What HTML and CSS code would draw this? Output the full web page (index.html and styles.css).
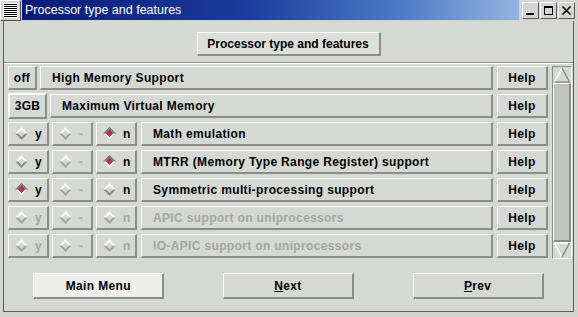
FILE: index.html
```html
<!DOCTYPE html>
<html lang="en">

<head>
  <meta charset="UTF-8">
  <title>Processor type and features</title>
  <link rel="stylesheet" href="styles.css">
</head>

<body>
  <div class="win">
    <div class="titlebar">
      <div class="menu-btn">
        <svg width="15" height="15" viewBox="0 0 15 15">
          <rect x="0" y="0" width="15" height="15" fill="#fff" />
          <path d="M1 1.5h13M1 3.5h13M1 5.5h13M1 7.5h13M1 9.5h13M1 11.5h13M1 13.5h13" stroke="#000" stroke-width="1" />
        </svg>
      </div>
      <div class="title">Processor type and features</div>
      <div class="tb-btns">
        <div class="tb">
          <svg width="11" height="11" viewBox="0 0 11 11"><rect x="1" y="8" width="8" height="2" fill="#000" /></svg>
        </div>
        <div class="tb">
          <svg width="11" height="11" viewBox="0 0 11 11"><rect x="1.5" y="1.5" width="8" height="8" fill="none" stroke="#000" /><rect x="1" y="1" width="9" height="2" fill="#000" /></svg>
        </div>
        <div class="tb">
          <svg width="11" height="11" viewBox="0 0 11 11"><path d="M1.5 1.5l8 8M9.5 1.5l-8 8" stroke="#000" stroke-width="1.6" /></svg>
        </div>
      </div>
    </div>

    <div class="client">
      <div class="head">
        <div class="btn head-btn">Processor type and features</div>
      </div>

      <div class="list">
        <div class="rows">
          <div class="row">
            <div class="btn val val-off">off</div>
            <div class="btn label">High Memory Support</div>
            <div class="btn help">Help</div>
          </div>
          <div class="row">
            <div class="btn val val-gb">3GB</div>
            <div class="btn label label-gb">Maximum Virtual Memory</div>
            <div class="btn help">Help</div>
          </div>
          <div class="row">
            <div class="btn radio"><span class="dia"></span><span class="let">y</span></div>
            <div class="btn radio off"><span class="dia"></span><span class="let">-</span></div>
            <div class="btn radio"><span class="dia on"></span><span class="let">n</span></div>
            <div class="btn label label-tri">Math emulation</div>
            <div class="btn help">Help</div>
          </div>
          <div class="row">
            <div class="btn radio"><span class="dia"></span><span class="let">y</span></div>
            <div class="btn radio off"><span class="dia"></span><span class="let">-</span></div>
            <div class="btn radio"><span class="dia on"></span><span class="let">n</span></div>
            <div class="btn label label-tri">MTRR (Memory Type Range Register) support</div>
            <div class="btn help">Help</div>
          </div>
          <div class="row">
            <div class="btn radio"><span class="dia on"></span><span class="let">y</span></div>
            <div class="btn radio off"><span class="dia"></span><span class="let">-</span></div>
            <div class="btn radio"><span class="dia"></span><span class="let">n</span></div>
            <div class="btn label label-tri">Symmetric multi-processing support</div>
            <div class="btn help">Help</div>
          </div>
          <div class="row">
            <div class="btn radio off"><span class="dia"></span><span class="let">y</span></div>
            <div class="btn radio off"><span class="dia"></span><span class="let">-</span></div>
            <div class="btn radio off"><span class="dia"></span><span class="let">n</span></div>
            <div class="btn label label-tri off">APIC support on uniprocessors</div>
            <div class="btn help">Help</div>
          </div>
          <div class="row">
            <div class="btn radio off"><span class="dia"></span><span class="let">y</span></div>
            <div class="btn radio off"><span class="dia"></span><span class="let">-</span></div>
            <div class="btn radio off"><span class="dia"></span><span class="let">n</span></div>
            <div class="btn label label-tri off">IO-APIC support on uniprocessors</div>
            <div class="btn help">Help</div>
          </div>
        </div>

        <div class="scroll">
          <svg class="arrow" width="18" height="16" viewBox="0 0 18 16">
            <path d="M9 1L1.5 15" stroke="#fff" stroke-width="1.5" fill="none" />
            <path d="M9 1L16.5 15M1.5 15h15" stroke="#8a8e88" stroke-width="1.5" fill="none" />
          </svg>
          <div class="slider"></div>
          <svg class="arrow" width="18" height="16" viewBox="0 0 18 16">
            <path d="M1.5 1h15M1.5 1L9 15" stroke="#fff" stroke-width="1.5" fill="none" />
            <path d="M16.5 1L9 15" stroke="#8a8e88" stroke-width="1.5" fill="none" />
          </svg>
        </div>
      </div>

      <div class="foot">
        <div class="btn big main">Main Menu</div>
        <div class="btn big"><u>N</u>ext</div>
        <div class="btn big"><u>P</u>rev</div>
      </div>
    </div>
  </div>
</body>

</html>
```

FILE: styles.css
```css
* {
  margin: 0;
  padding: 0;
  box-sizing: border-box;
}

body {
  background-color: #d6d9d3;
  font-family: "Liberation Sans", Arial, sans-serif;
}

.win {
  width: 578px;
  height: 317px;
  background-color: #d4d4d2;
  display: flex;
  flex-direction: column;
}

/* title bar */
.titlebar {
  height: 21px;
  display: flex;
}

.menu-btn {
  width: 21px;
  height: 21px;
  border: 1px solid;
  border-color: #fff #555 #555 #fff;
  display: flex;
  align-items: center;
  justify-content: center;
}

.title {
  flex: 1;
  margin: 0 2px 1px 1px;
  padding-left: 3px;
  background: linear-gradient(to right, #0a1a74, #1a3c9c 45%, #4a78c4 75%, #94b4e2);
  color: #fff;
  font-size: 12.5px;
  line-height: 20px;
}

.tb-btns {
  display: flex;
  gap: 1px;
  padding: 2px 3px 0 1px;
}

.tb {
  width: 17px;
  height: 17px;
  border: 1px solid;
  border-color: #fff #555 #555 #fff;
  display: flex;
  align-items: center;
  justify-content: center;
}

/* client area */
.client {
  flex: 1;
  margin: 0 4px 5px 3px;
  border: 1px solid #5a5a5a;
  border-top: none;
  background-color: #d6d9d3;
  display: flex;
  flex-direction: column;
}

.btn {
  border-style: solid;
  border-width: 1px 2px 2px 1px;
  border-color: #fff #8a8e88 #8a8e88 #fff;
  font-size: 12px;
  font-weight: bold;
  letter-spacing: 0.35px;
  color: #000;
  display: flex;
  align-items: center;
}

.head {
  height: 42px;
  padding-top: 11px;
  display: flex;
  justify-content: center;
  border-bottom: 1px solid #8a8e88;
}

.head-btn {
  width: 184px;
  height: 24px;
  justify-content: center;
  letter-spacing: 0;
  background-color: #dcdfda;
}

.list {
  display: flex;
  border-top: 1px solid #fff;
}

.rows {
  flex: 1;
  padding-left: 4px;
}

.row {
  height: 28px;
  display: flex;
  align-items: center;
  gap: 3px;
}

.row > .btn {
  height: 24px;
}

.val {
  justify-content: center;
}

.val-off {
  width: 29px;
}

.val-gb {
  width: 39px;
  height: 26px !important;
  border-width: 2px;
}

.label {
  flex: 1;
  padding-left: 11px;
}

.label-tri {
  margin-left: 1px;
}

.help {
  width: 51px;
  margin-left: 1px;
  justify-content: center;
}

.radio {
  width: 41px;
  padding-left: 6px;
}

.radio .let {
  margin-left: 7px;
}

.dia {
  width: 9px;
  height: 9px;
  margin: 0 2px;
  transform: rotate(45deg);
  border: 2px solid;
  border-color: #fff #8a8e88 #8a8e88 #fff;
  background-color: #d6d9d3;
}

.dia.on {
  border-color: #7a7e78 #fff #fff #7a7e78;
  background-color: #b03060;
}

.off {
  color: #a3a5a1;
}

.radio.off .dia {
  border-color: #fff #a0a49e #a0a49e #fff;
}

/* scrollbar */
.scroll {
  width: 20px;
  height: 193px;
  margin: 2px 1px 0 4px;
  background-color: #bfc5bd;
  border: 1px solid;
  border-color: #8a8e88 #fff #fff #8a8e88;
  display: flex;
  flex-direction: column;
}

.arrow {
  display: block;
  background-color: #d6d9d3;
}

.slider {
  flex: 1;
  border-style: solid;
  border-width: 1px 2px 2px 1px;
  border-color: #fff #8a8e88 #8a8e88 #fff;
  background-color: #bfc5bd;
}

/* bottom buttons */
.foot {
  flex: 1;
  padding-top: 13px;
  display: flex;
  justify-content: space-around;
  align-items: flex-start;
}

.big {
  width: 131px;
  height: 26px;
  justify-content: center;
}

.big u {
  text-decoration-thickness: 1px;
}

.main {
  background-color: #eeeeec;
}
```
